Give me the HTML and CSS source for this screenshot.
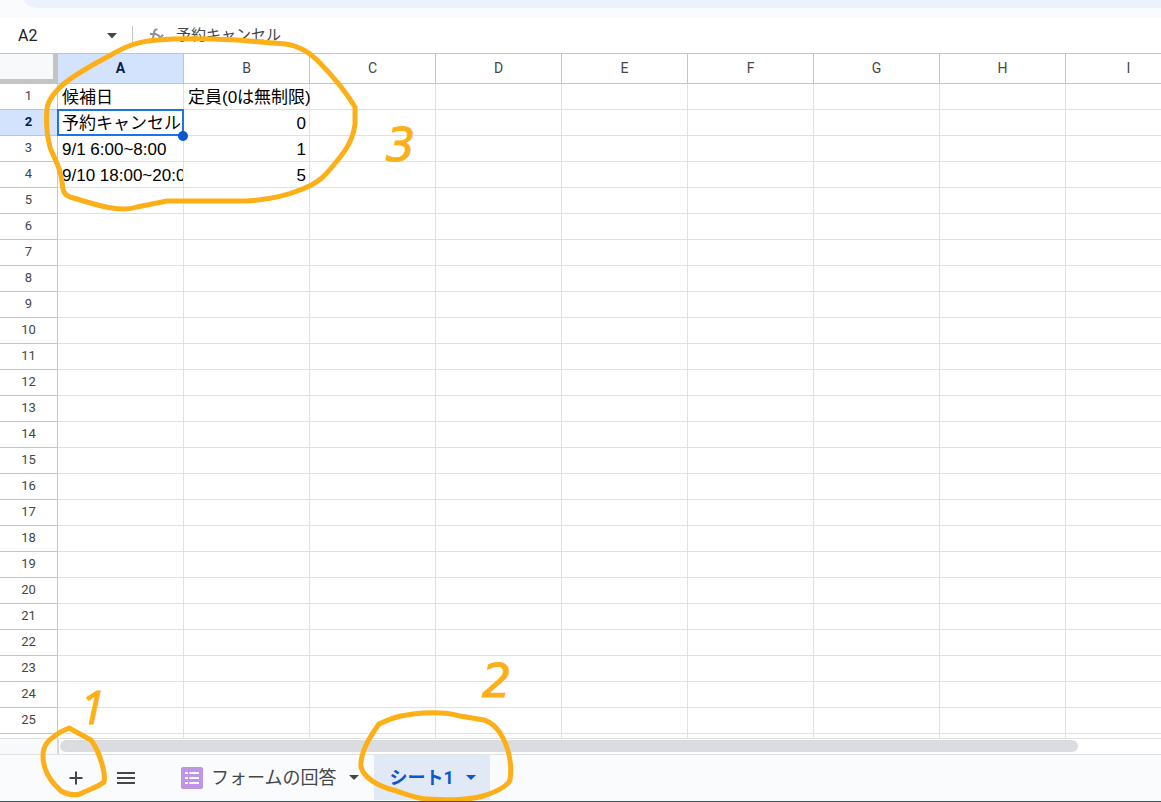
FILE: index.html
```html
<!DOCTYPE html>
<html lang="ja">
<head>
    <meta charset="UTF-8">
    <title>シート1</title>
    <link rel="stylesheet" href="styles.css">
</head>
<body>
<div class="toolbar-area">
    <div class="toolbar"></div>
</div>

<div class="formula-bar">
    <input class="name-box" type="text" value="A2" aria-label="名前ボックス">
    <button class="name-arrow" aria-label="名前付き範囲">
        <svg width="10" height="6" viewBox="0 0 10 6"><path d="M0 0h10L5 5.5z" fill="#444746"/></svg>
    </button>
    <svg class="fx" width="18" height="16" viewBox="0 0 18 16" fill="none" stroke="#8f9193" stroke-width="2">
        <path d="M9.5 1.600C7.500 1 6.600 2 6.200 4L4.600 12C4.200 14 3.200 14.700 1.300 14.200M2 6h6.800M8.500 7.200c2-.8 2.400 0 3 2.200l.6 1.900c.5 1.700 1.100 2 2.700 1.500M15.300 6.700L7.800 13.200"/>
    </svg>
    <input class="formula" type="text" value="予約キャンセル" aria-label="数式バー">
</div>

<div class="grid">
    <table class="sheet">
        <thead>
        <tr id="cols"><th class="corner"></th></tr>
        </thead>
        <tbody id="rows"></tbody>
    </table>
</div>

<div class="scroll-row">
    <div class="scroll-head"></div>
    <div class="scroll-track"><div class="scroll-thumb"></div></div>
</div>

<div class="tab-bar">
    <button class="icon-btn" aria-label="シートを追加">
        <svg width="14" height="14" viewBox="0 0 14 14"><path d="M7 .5v13M.5 7h13" stroke="#444746" stroke-width="2"/></svg>
    </button>
    <button class="icon-btn" aria-label="すべてのシート">
        <svg width="18" height="12" viewBox="0 0 18 12"><path d="M0 1h18M0 6h18M0 11h18" stroke="#444746" stroke-width="2"/></svg>
    </button>
    <button class="tab">
        <svg class="form-icon" width="22" height="22" viewBox="0 0 22 22">
            <rect width="22" height="22" rx="2" fill="#bf94e4"/>
            <path d="M4 6h3M4 11h3M4 16h3M8.500 6H18M8.500 11H18M8.500 16H18" stroke="#fff" stroke-width="2.200"/>
        </svg>
        <span>フォームの回答</span>
        <svg class="tab-arrow" width="10" height="5" viewBox="0 0 10 5"><path d="M0 0h10L5 5z" fill="#444746"/></svg>
    </button>
    <button class="tab active">
        <span>シート1</span>
        <svg class="tab-arrow" width="10" height="5" viewBox="0 0 10 5"><path d="M0 0h10L5 5z" fill="#0b57d0"/></svg>
    </button>
</div>

<!-- marker notes over the sheet -->
<svg class="marker" width="520" height="802" viewBox="0 0 520 802">
    <path d="M47 109C48 99 55 91 66 82C78 73 94 64 109 56C124 47 138 41 158 40C180 38 215 39 237 40L286 44C298 46 308 51 317 60C334 77 346 92 355 107V124C353 139 347 149 337 161C325 176 319 183 300 190C283 197 267 200 245 201H167L137 207C126 211 108 208 94 204L70 197C63 194 63 190 62 182C61 167 53 157 50 147C46 132 46 121 47 109Z"/>
    <path d="M69 728L91 740C97 748 99 754 102 764C104 771 105 777 104 782C98 787 90 789 80 794C72 796 66 794 61 791L55 785C47 776 43 766 43 756C43 744 50 739 56 735C61 731 65 730 69 728Z"/>
    <path d="M379 724C391 718 400 715 423 713C438 712 450 713 460 716L484 720C494 723 499 730 503 738C509 750 512 766 510 780C507 787 496 792 483 796C464 801 444 800 427 799C413 798 404 793 393 790C378 786 364 778 361 767C360 755 368 739 379 724Z"/>
</svg>
<span class="note note-1">1</span>
<span class="note note-2">2</span>
<span class="note note-3">3</span>

<script>
    var cols = ['A', 'B', 'C', 'D', 'E', 'F', 'G', 'H', 'I'];
    var data = [
        ['候補日', '定員(0は無制限)'],
        ['予約キャンセル', 0],
        ['9/1 6:00~8:00', 1],
        ['9/10 18:00~20:00', 5]
    ];
    var selected = {row: 2, col: 'A'};
    var lastRow = 25;

    cols.forEach(function (name) {
        var th = document.createElement('th');
        th.scope = 'col';
        th.textContent = name;
        if (name === selected.col) th.className = 'on';
        document.getElementById('cols').appendChild(th);
    });

    //one more row without a number runs under the scrollbar
    for (var r = 1; r <= lastRow + 1; r++) {
        var tr = document.createElement('tr');
        var head = document.createElement('th');
        head.scope = 'row';
        head.textContent = r <= lastRow ? r : '';
        if (r === selected.row) head.className = 'on';
        tr.appendChild(head);

        cols.forEach(function (name, i) {
            var td = document.createElement('td');
            var value = data[r - 1] ? data[r - 1][i] : undefined;
            if (value !== undefined) {
                var cell = document.createElement('div');
                cell.className = typeof value === 'number' ? 'cell num' : 'cell';
                //text runs on into the next column while that one is empty
                if (data[r - 1][i + 1] === undefined) cell.className += ' spill';
                cell.textContent = value;
                td.appendChild(cell);
            }
            if (r === selected.row && name === selected.col) td.className = 'selected';
            tr.appendChild(td);
        });
        document.getElementById('rows').appendChild(tr);
    }
</script>
</body>
</html>
```
FILE: styles.css
```css
* {
    box-sizing: border-box;
}

body {
    display: flex;
    flex-direction: column;
    height: 100vh;
    margin: 0;
    overflow: hidden;
    position: relative;
    background: #fff;
    border-bottom: 1px solid #3f5357;
    font-family: Roboto, "Noto Sans CJK JP", sans-serif;
    color: #444746;
}

button, input {
    border: 0;
    padding: 0;
    background: none;
    font-family: inherit;
    color: inherit;
}

.toolbar-area {
    flex: none;
    height: 18px;
    padding-left: 24px;
    background: #f9fbfd;
}

.toolbar {
    height: 8px;
    background: #ebf2fb;
    border-bottom-left-radius: 16px 8px;
}

.formula-bar {
    display: flex;
    flex: none;
    align-items: center;
    height: 35px;
    padding-left: 18px;
}

.name-box {
    width: 84px;
    font-size: 16px;
    color: #202124;
}

.name-arrow {
    display: flex;
    align-items: center;
    width: 31px;
    height: 20px;
    padding-left: 5px;
    border-right: 1px solid #c7c7c7;
}

.fx {
    margin: 0 10px 0 15px;
}

.formula {
    flex: 1;
    padding-bottom: 5px;
    font-size: 15px;
    color: #444746;
}

.grid {
    flex: 1;
    min-height: 0;
    overflow: hidden;
    border-top: 1px solid #c4c4c4;
    border-bottom: 1px solid #e1e1e1;
}

.sheet {
    width: 1192px;
    table-layout: fixed;
    border-collapse: separate;
    border-spacing: 0;
}

.sheet th {
    width: 126px;
    height: 26px;
    padding: 0 0 2px;
    border-right: 1px solid #c4c4c4;
    border-bottom: 1px solid #c4c4c4;
    font-size: 13px;
    font-weight: 400;
    line-height: 16px;
}

.sheet thead th {
    height: 30px;
    font-size: 14px;
}

.sheet .corner {
    width: 58px;
    background: #f8f9fa;
    border-right: 5px solid #c4c4c4;
    border-bottom: 5px solid #c4c4c4;
}

.sheet th.on {
    background: #d3e3fd;
    color: #041e49;
    font-weight: 700;
}

.sheet td {
    height: 26px;
    padding: 0;
    border-right: 1px solid #e1e1e1;
    border-bottom: 1px solid #e1e1e1;
}

.cell {
    height: 25px;
    padding: 0 3px 0 4px;
    overflow: hidden;
    white-space: nowrap;
    font-family: "Liberation Sans", "Noto Sans CJK JP", sans-serif;
    font-size: 17px;
    line-height: 28px;
    color: #000;
}

.num {
    text-align: right;
}

.spill {
    overflow: visible;
}

.selected {
    position: relative;
}

.selected::before {
    content: "";
    position: absolute;
    inset: -1px;
    border: 2px solid #1a73e8;
}

.selected::after {
    content: "";
    position: absolute;
    right: -5px;
    bottom: -6px;
    width: 10px;
    height: 10px;
    border-radius: 50%;
    background: #0b57d0;
}

.scroll-row {
    display: flex;
    flex: none;
    height: 15px;
}

.scroll-head {
    width: 59px;
    background: #f8f9fa;
    border-right: 2px solid #d9d9d9;
}

.scroll-track {
    flex: 1;
    padding: 1px 0 0 1px;
}

.scroll-thumb {
    width: 92.500%;
    height: 12px;
    border-radius: 6px;
    background: #dadce0;
}

.tab-bar {
    display: flex;
    flex: none;
    height: 47px;
    padding-left: 51px;
    background: #f9fbfd;
    border-top: 1px solid #e1e1e1;
}

.icon-btn {
    display: flex;
    align-items: center;
    justify-content: center;
    width: 50px;
    height: 45px;
}

.tab {
    display: flex;
    align-items: center;
    height: 45px;
    margin-left: 14px;
    padding: 0 15px 0 16px;
    font-size: 18px;
}

.tab span {
    padding-bottom: 3px;
}

.form-icon {
    margin-right: 8px;
}

.tab-arrow {
    margin-left: 13px;
}

.tab.active {
    margin-left: 0;
    padding: 0 14px 0 15px;
    background: #e1e9f7;
    color: #0b57d0;
    font-weight: 700;
}

.tab.active .tab-arrow {
    margin-left: 12px;
}

.marker {
    position: absolute;
    top: 0;
    left: 0;
    fill: none;
    stroke: #fcaf17;
    stroke-width: 5;
    stroke-linejoin: round;
    pointer-events: none;
}

.note {
    position: absolute;
    font-family: "DejaVu Sans", sans-serif;
    font-size: 46px;
    font-style: oblique;
    line-height: 46px;
    color: #fcaf17;
    -webkit-text-stroke: 1px #fcaf17;
    pointer-events: none;
}

.note-1 {
    left: 80px;
    top: 683px;
    font-family: "Open Sans", sans-serif;
}

.note-2 {
    left: 482px;
    top: 658px;
}

.note-3 {
    left: 386px;
    top: 122px;
}
```
